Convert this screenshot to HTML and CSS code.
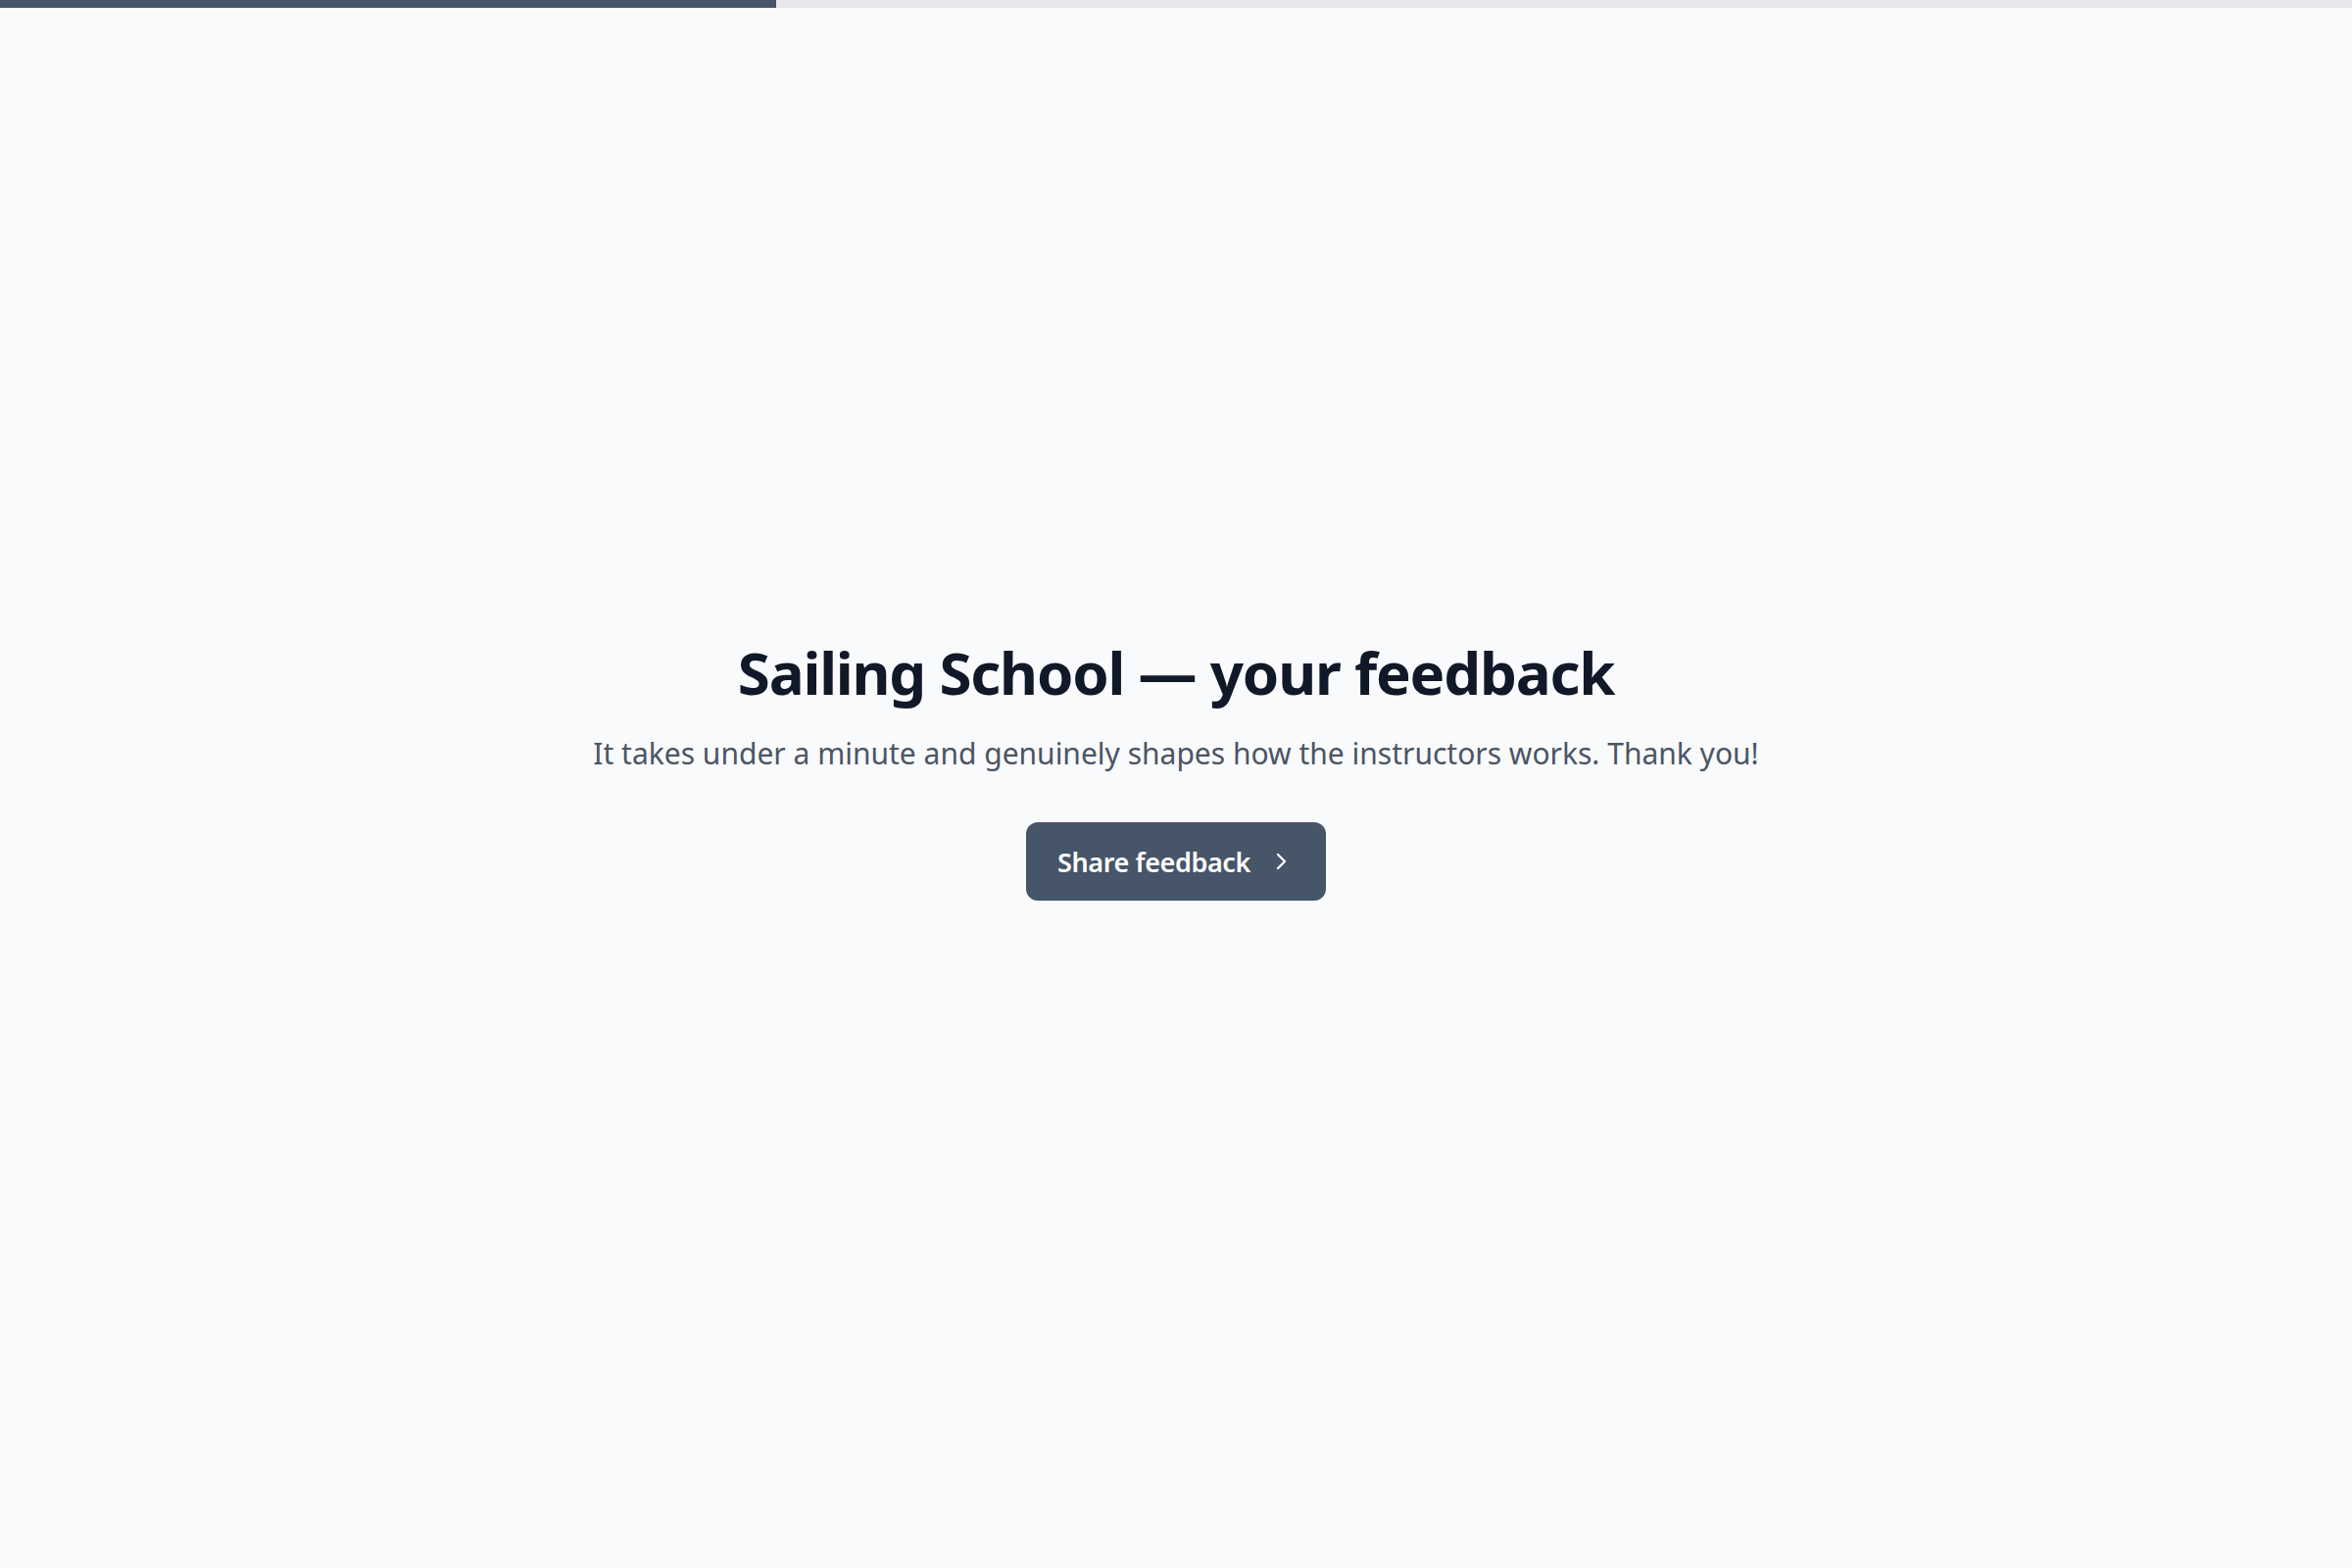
FILE: index.html
```html
<!DOCTYPE html>
<html lang="en">
<head>
<meta charset="utf-8">
<title>Sailing School — your feedback</title>
<link rel="stylesheet" href="styles.css">
</head>
<body>
<div class="progress"><div class="progress-fill" style="width:33%"></div></div>
<main class="intro">
  <h1 class="title">Sailing School — your feedback</h1>
  <p class="subtitle">It takes under a minute and genuinely shapes how the instructors works. Thank you!</p>
  <button class="cta" type="button">
    <span>Share feedback</span>
    <svg class="cta-icon" viewBox="0 0 24 24" width="24" height="24" aria-hidden="true"><path d="M9 5l7 7-7 7" fill="none" stroke="currentColor" stroke-width="2.4" stroke-linecap="round" stroke-linejoin="round"/></svg>
  </button>
</main>
</body>
</html>
```
FILE: styles.css
```css
html, body {
  margin: 0;
  padding: 0;
  height: 100%;
}
body {
  background: #f8fafc;
  font-family: "Segoe UI", "Noto Sans", "Open Sans", sans-serif;
  display: flex;
  flex-direction: column;
}
.progress {
  height: 8px;
  background: #e5e7eb;
  flex: none;
}
.progress-fill {
  height: 100%;
  background: #475569;
}
.intro {
  flex: 1;
  display: flex;
  flex-direction: column;
  align-items: center;
  justify-content: center;
  text-align: center;
  padding-bottom: 39px;
}
.title {
  margin: 0;
  font-size: 60px;
  font-weight: 700;
  color: #111827;
  line-height: 1.2;
  letter-spacing: -1.2px;
}
.subtitle {
  margin: 26px 0 0;
  font-size: 30px;
  color: #4b5563;
  line-height: 1.4;
}
.cta {
  margin-top: 49px;
  display: inline-flex;
  align-items: center;
  gap: 19px;
  height: 80px;
  padding: 0 34px 0 32px;
  border: none;
  border-radius: 12px;
  background: #475569;
  color: #ffffff;
  font-family: inherit;
  font-size: 27px;
  font-weight: 600;
  letter-spacing: -0.4px;
  cursor: pointer;
}
.cta-icon {
  width: 24px;
  height: 24px;
}
```
